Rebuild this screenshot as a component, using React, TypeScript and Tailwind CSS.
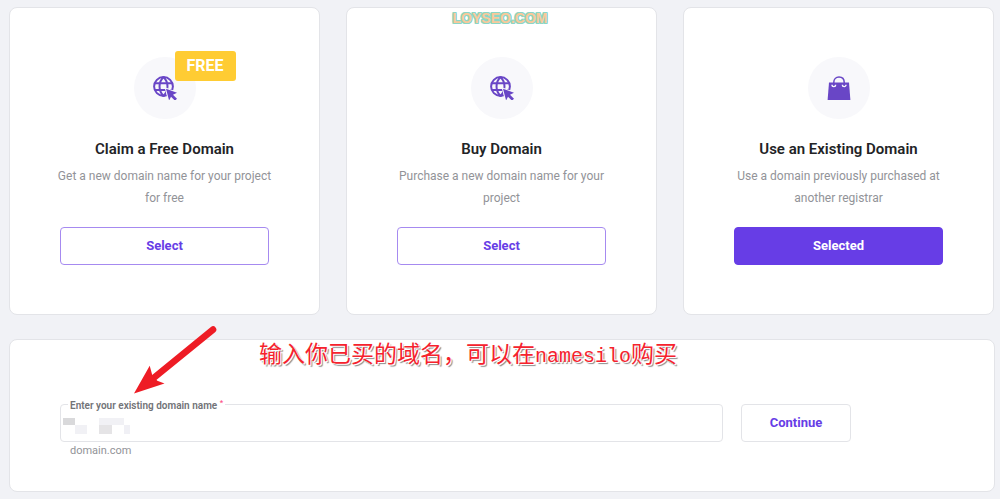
import React, { useState } from 'react'

type DomainOption = {
  key: string
  title: string
  text: string
  icon: React.ComponentType
  badge?: string
}

function GlobeIcon() {
  return (
    <svg viewBox="0 0 24 24" className="h-6 w-6" fill="none" aria-hidden="true">
      <g stroke="#6946c6" strokeWidth="2">
        <circle cx="10.5" cy="10.5" r="9.4" />
        <path d="M2 7.2h17M2 14h17M10.5 1C5.2 6.2 5.2 14.800 10.5 20M10.5 1c5.300 5.200 5.300 13.800 0 19" />
      </g>
      <path
        d="M13 12.800l11 4-4 2 4 3.900-2 2-4-4-1.900 3.800z"
        fill="#6946c6"
        stroke="#f8f8fb"
        strokeWidth="2"
        paintOrder="stroke"
      />
    </svg>
  )
}

function BagIcon() {
  return (
    <svg viewBox="0 0 24 24" className="h-6 w-6" fill="none" aria-hidden="true">
      <path d="M2 6.5h20L23.4 24H.6z" fill="#6946c6" />
      <path
        d="M5 8.800a1.800 1.800 0 1 0 3.600 0M15.400 8.800a1.800 1.800 0 1 0 3.600 0"
        stroke="#f8f8fb"
        strokeWidth="1.4"
      />
      <path d="M6.8 9.5V6.3C6.8 3 9 1 12 1s5.2 2 5.2 5.3v3.2" stroke="#6946c6" strokeWidth="1.5" />
    </svg>
  )
}

const options: DomainOption[] = [
  { key: 'free',     title: 'Claim a Free Domain',    text: 'Get a new domain name for your project for free',       icon: GlobeIcon, badge: 'FREE' },
  { key: 'buy',      title: 'Buy Domain',             text: 'Purchase a new domain name for your project',           icon: GlobeIcon },
  { key: 'existing', title: 'Use an Existing Domain', text: 'Use a domain previously purchased at another registrar', icon: BagIcon },
]

function OptionCard({ option, selected, onSelect }: { option: DomainOption; selected: boolean; onSelect: () => void }) {
  const Icon = option.icon
  return (
    <article className="flex flex-col items-center rounded-lg border border-[#e3e4e8] bg-white px-[50px] py-[49px] text-center">
      <div className="relative flex h-[62px] w-[62px] items-center justify-center rounded-full bg-[#f8f8fb]">
        <Icon />
        {option.badge && (
          <span className="absolute -top-1.5 left-[41px] rounded-[3px] bg-[#ffcc33] px-3 py-[5px] text-[16px] leading-5 font-bold text-white">
            {option.badge}
          </span>
        )}
      </div>
      <h2 className="mt-5 text-[15px] leading-5 font-semibold text-[#222326]">{option.title}</h2>
      <p className="-mx-2 mt-1.5 text-[12px] leading-[22px] text-[#929398]">{option.text}</p>
      <button
        type="button"
        aria-pressed={selected}
        onClick={onSelect}
        className={`mt-[18px] h-[38px] w-full rounded-[4px] border text-[13px] font-bold ${
          selected ? 'border-[#673de6] bg-[#673de6] text-white' : 'border-[#a68af0] bg-white text-[#673de6]'
        }`}
      >
        {selected ? 'Selected' : 'Select'}
      </button>
    </article>
  )
}

export default function App() {
  const [selected, setSelected] = useState('existing')
  const [domain, setDomain] = useState('')

  return (
    <main className="relative min-h-screen bg-[#f1f2f6] pt-[7px] pr-[5px] pb-[7px] pl-[9px] font-['Roboto',sans-serif]">
      <div className="grid grid-cols-3 gap-[26px] pr-px">
        {options.map(option => (
          <OptionCard
            key={option.key}
            option={option}
            selected={selected === option.key}
            onSelect={() => setSelected(option.key)}
          />
        ))}
      </div>

      {/* Watermark */}
      <span className="absolute top-2 left-1/2 -translate-x-1/2 font-['Liberation_Sans',sans-serif] text-[14px] leading-5 font-bold text-[#f9c99a] [text-shadow:1px_0_#8bd6c6,-1px_0_#8bd6c6,0_1px_#8bd6c6,0_-1px_#8bd6c6,1px_1px_#8bd6c6,-1px_-1px_#8bd6c6,1px_-1px_#8bd6c6,-1px_1px_#8bd6c6]">
        LOYSEO.COM
      </span>

      <section className="relative mt-6 rounded-lg border border-[#e3e4e8] bg-white px-[50px] pt-16 pb-[31px]">
        <form className="flex items-start gap-[18px]" onSubmit={e => e.preventDefault()}>
          <div className="w-3/4">
            <div className="relative">
              <input
                id="domain"
                type="text"
                required
                value={domain}
                onChange={e => setDomain(e.target.value)}
                aria-describedby="domain-hint"
                className="block h-[38px] w-full rounded-[4px] border border-[#e3e4e8] bg-white px-2.5 text-[13px] outline-none"
              />
              <label
                htmlFor="domain"
                className="absolute -top-1.5 left-2 bg-white px-0.5 text-[10px] leading-4 font-semibold text-[#727377]"
              >
                Enter your existing domain name <sup className="text-[#fc5185]">*</sup>
              </label>
              {/* Mosaic over the typed value */}
              <svg viewBox="0 0 68 16" className="pointer-events-none absolute top-3.5 left-[3px] h-4 w-[68px]" aria-hidden="true">
                <path d="M0 0h12v7H0z" fill="#d9d9db" />
                <path d="M12 7h12v9H12zM36 0h25v7H36z" fill="#f1f1f5" />
                <path d="M36 7h13v9H36z" fill="#e5e4e6" />
                <path d="M61 7h6v9h-6z" fill="#f0f0f5" />
              </svg>
            </div>
            <p id="domain-hint" className="px-2.5 text-[11px] leading-[18px] text-[#929398]">domain.com</p>
          </div>
          <button
            type="submit"
            className="h-[38px] w-[110px] rounded-[4px] border border-[#e3e4e8] bg-white text-[13px] font-bold text-[#673de6]"
          >
            Continue
          </button>
        </form>

        {/* Note and arrow pointing at the field */}
        <svg viewBox="0 0 84 70" className="pointer-events-none absolute -top-3.5 left-[123px] h-[70px] w-[84px]" aria-hidden="true">
          <path d="M80 3.6L20 52.5" stroke="#ee1c25" strokeWidth="6.6" strokeLinecap="round" />
          <path d="M1 67.5L16.7 39.8l2.6 9.5 5 5.5L31.5 57.6z" fill="#ee1c25" />
        </svg>
        <p
          lang="zh-CN"
          className="absolute -top-0.5 left-[249px] font-['Noto_Sans_CJK_SC',sans-serif] text-[23px] leading-7 whitespace-nowrap text-[#f5222d] [text-shadow:1px_1px_0_#fff,-1px_-1px_0_#fff,2px_2px_1px_#888]"
        >
          输入你已买的域名，可以在<span className="font-['Liberation_Mono',monospace] text-[20px]">namesilo</span>购买
        </p>
      </section>
    </main>
  )
}
